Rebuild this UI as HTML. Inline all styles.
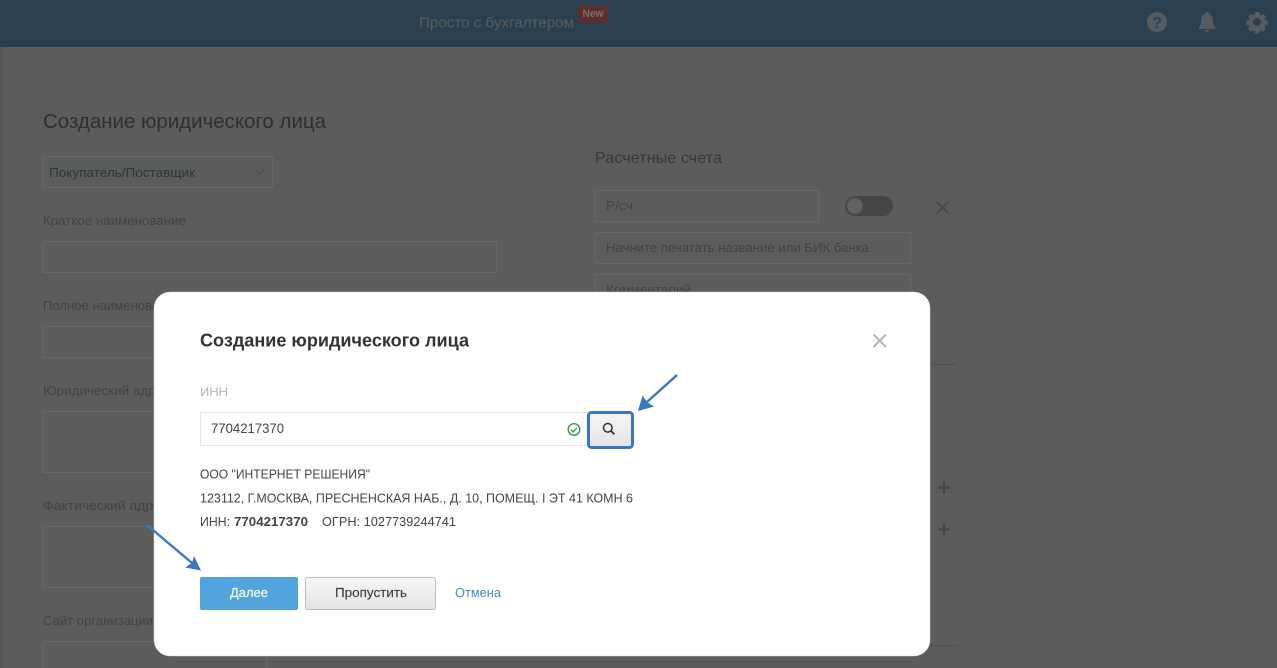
<!DOCTYPE html>
<html lang="ru"><head><meta charset="utf-8"><title>Создание юридического лица</title>
<style>
html,body{margin:0;padding:0;width:1277px;height:668px;overflow:hidden;background:#5b5d5c}
svg{display:block;position:absolute;left:0;top:0}
text{font-family:"Liberation Sans",sans-serif;white-space:pre}
</style></head><body>
<svg width="1277" height="668" viewBox="0 0 1277 668" xmlns="http://www.w3.org/2000/svg">
<defs>
<linearGradient id="g" x1="0" y1="0" x2="0" y2="1"><stop offset="0" stop-color="#f6f6f6"/><stop offset="1" stop-color="#e4e4e4"/></linearGradient>
</defs>
<rect width="1277" height="668" fill="#5b5d5c"/>
<rect x="0" y="47" width="3" height="621" fill="#555759"/>
<rect x="0" y="0" width="1277" height="47" fill="#2a4051"/>
<text x="419" y="27.500" font-size="15" fill="#565b5e" stroke="#565b5e" stroke-width="0.150" textLength="155" lengthAdjust="spacingAndGlyphs">Просто с бухгалтером</text>
<rect x="578" y="5" width="30" height="18" rx="3" fill="#5c2f2f"/>
<text x="582.500" y="17" font-size="11" font-weight="bold" fill="#7f6a69" textLength="21" lengthAdjust="spacingAndGlyphs">New</text>
<circle cx="1157" cy="22" r="10" fill="#555b5f"/>
<text x="1157" y="28" font-size="16" font-weight="bold" fill="#2a4051" text-anchor="middle">?</text>
<path d="M1207 12c1 0 2 1 2 2 3 1 4 4 4 7 0 3 1 5 2 6 .5 1 .5 2 0 2h-16c-.5 0-.5-1 0-2 1-1 2-3 2-6 0-3 1-6 4-7 0-1 1-2 2-2zM1204.500 30h5c0 1-1 2-2.500 2s-2.500-1-2.500-2z" fill="#555b5f"/>
<path fill-rule="evenodd" fill="#555b5f" d="M1255 12h4l.5 2.600 1.500.6 2.200-1.400 2.800 2.800-1.400 2.200.6 1.500 2.600.5v4l-2.600.5-.6 1.500 1.400 2.200-2.800 2.800-2.200-1.400-1.500.6-.5 2.600h-4l-.5-2.600-1.500-.6-2.200 1.400-2.800-2.800 1.400-2.200-.6-1.500-2.600-.5v-4l2.600-.5.6-1.500-1.400-2.200 2.800-2.800 2.200 1.400 1.500-.6zM1257 18a4 4 0 1 0 0 8 4 4 0 0 0 0-8z"/>

<text x="43" y="128" font-size="20" fill="#2d2f30" textLength="283" lengthAdjust="spacingAndGlyphs">Создание юридического лица</text>
<rect x="43.500" y="156.500" width="229" height="31" fill="none" stroke="#666867"/>
<text x="49" y="177" font-size="13" fill="#2f3438" textLength="146" lengthAdjust="spacingAndGlyphs">Покупатель/Поставщик</text>
<path d="M255 169l4.500 5 4.500-5" fill="none" stroke="#484a4a" stroke-width="1"/>
<g font-size="13" fill="#414343">
<text x="43" y="225" textLength="143" lengthAdjust="spacingAndGlyphs">Краткое наименование</text>
<text x="43" y="310" textLength="138" lengthAdjust="spacingAndGlyphs">Полное наименование</text>
<text x="43" y="395" textLength="127" lengthAdjust="spacingAndGlyphs">Юридический адрес</text>
<text x="43" y="510" textLength="125" lengthAdjust="spacingAndGlyphs">Фактический адрес</text>
<text x="43" y="625" textLength="110" lengthAdjust="spacingAndGlyphs">Сайт организации</text>
</g>
<g fill="none" stroke="#666867">
<rect x="43.500" y="241.500" width="453" height="31"/>
<rect x="43.500" y="326.500" width="300" height="31"/>
<rect x="43.500" y="411.500" width="300" height="61"/>
<rect x="43.500" y="526.500" width="300" height="61"/>
<rect x="43.500" y="641.500" width="223" height="40"/>
<rect x="595.500" y="190.500" width="223" height="31"/>
<rect x="595.500" y="232.500" width="315" height="31"/>
<rect x="595.500" y="274.500" width="315" height="31"/>
</g>
<text x="595" y="163" font-size="16" fill="#373939" textLength="127" lengthAdjust="spacingAndGlyphs">Расчетные счета</text>
<text x="606" y="210" font-size="13" fill="#414343" textLength="27" lengthAdjust="spacingAndGlyphs">Р/сч</text>
<text x="606" y="252" font-size="13" fill="#414343" textLength="263" lengthAdjust="spacingAndGlyphs">Начните печатать название или БИК банка</text>
<text x="606" y="294" font-size="13" fill="#414343" textLength="85" lengthAdjust="spacingAndGlyphs">Комментарий</text>
<rect x="845" y="196" width="48" height="20" rx="10" fill="#444544"/>
<circle cx="855" cy="206" r="8.500" fill="#616362" stroke="#484a49" stroke-width="1.500"/>
<path d="M936.500 201.500l12 12M948.500 201.500l-12 12" stroke="#484a49" stroke-width="2" fill="none"/>
<path d="M930 364.500h27M930 645.500h27" stroke="#4e504f"/>
<path d="M938 487.500h12M944 481.500v12M938 529.500h12M944 523.500v12" stroke="#434545" stroke-width="2.200" fill="none"/>

<rect x="154" y="292" width="776" height="364" rx="16" fill="#fff" stroke="#d8d8d8" stroke-width="0.500"/>
<text x="200" y="346.500" font-size="18" font-weight="bold" fill="#333" textLength="269" lengthAdjust="spacingAndGlyphs">Создание юридического лица</text>
<path d="M873.500 334.500l12.500 12.500M886 334.500l-12.500 12.500" stroke="#b4b6b8" stroke-width="2" fill="none"/>
<text x="200" y="396" font-size="12" fill="#b6b3b0" textLength="28" lengthAdjust="spacingAndGlyphs">ИНН</text>
<rect x="200.500" y="412.500" width="390" height="33" fill="#fff" stroke="#e6e6e6"/>
<text x="211" y="433" font-size="13.500" fill="#444" textLength="73" lengthAdjust="spacingAndGlyphs">7704217370</text>
<circle cx="574" cy="429.500" r="5.800" fill="none" stroke="#3f9550" stroke-width="1.400"/>
<path d="M571 429.500l2.200 2.200 3.800-3.800" fill="none" stroke="#3f9550" stroke-width="1.400"/>
<rect x="588.500" y="412.500" width="44" height="35" rx="3" fill="url(#g)" stroke="#3a78bd" stroke-width="3"/>
<circle cx="607.800" cy="427.800" r="4.300" fill="none" stroke="#333" stroke-width="1.500"/>
<path d="M611 431l3.300 3.300" stroke="#333" stroke-width="1.800"/>
<path d="M677 375L647 402" stroke="#3a78bd" stroke-width="2.400" fill="none"/>
<path d="M638 411L642.500 395.500 647.500 402.500 654 406.500z" fill="#3a78bd"/>
<g font-size="12.500" fill="#444">
<text x="200" y="478.500" textLength="170" lengthAdjust="spacingAndGlyphs">ООО "ИНТЕРНЕТ РЕШЕНИЯ"</text>
<text x="200" y="502.500" textLength="433" lengthAdjust="spacingAndGlyphs">123112, Г.МОСКВА, ПРЕСНЕНСКАЯ НАБ., Д. 10, ПОМЕЩ. I ЭТ 41 КОМН 6</text>
<text x="200" y="526" textLength="30" lengthAdjust="spacingAndGlyphs">ИНН:</text>
<text x="234" y="526" font-weight="bold" textLength="74" lengthAdjust="spacingAndGlyphs">7704217370</text>
<text x="322" y="526" textLength="134" lengthAdjust="spacingAndGlyphs">ОГРН: 1027739244741</text>
</g>
<path d="M147 525L192 563" stroke="#3a78bd" stroke-width="2.400" fill="none"/>
<path d="M201 570.500L185 567.500 192 563 194 556z" fill="#3a78bd"/>
<rect x="200" y="577" width="98" height="33" rx="2" fill="#52a5dc"/>
<text x="230" y="597" font-size="13" fill="#f4f9fd" stroke="#f4f9fd" stroke-width="0.250" textLength="38" lengthAdjust="spacingAndGlyphs">Далее</text>
<rect x="305.500" y="577.500" width="130" height="32" rx="2" fill="url(#g)" stroke="#bdbdbd"/>
<text x="335" y="597" font-size="13" fill="#3c3c44" stroke="#3c3c44" stroke-width="0.150" textLength="72" lengthAdjust="spacingAndGlyphs">Пропустить</text>
<text x="455" y="597" font-size="13" fill="#4b87bd" textLength="46" lengthAdjust="spacingAndGlyphs">Отмена</text>
</svg>
</body></html>
